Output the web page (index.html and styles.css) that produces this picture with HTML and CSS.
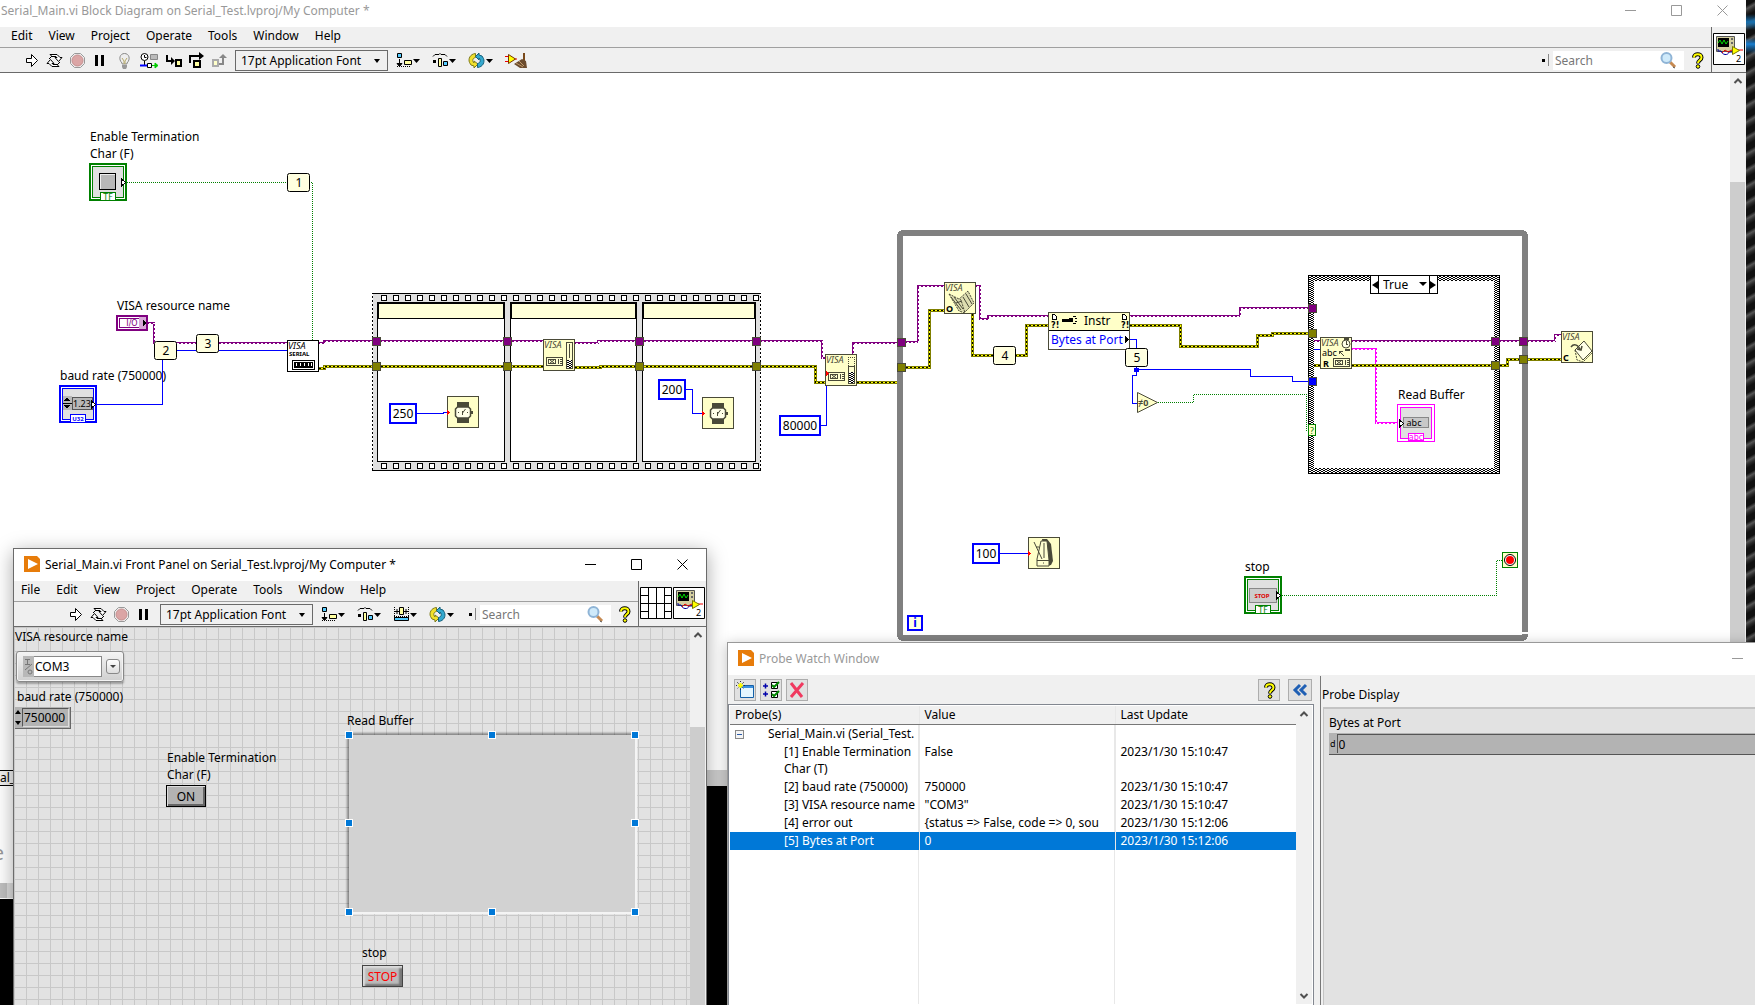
FILE: index.html
```html
<!DOCTYPE html>
<html lang="en">
  <head>
    <meta charset="UTF-8" />
    <meta name="viewport" content="width=device-width, initial-scale=1.0" />
    <title>Serial_Main.vi</title>
    <link rel="stylesheet" href="styles.css" />
  </head>
  <body>
    <!-- shared icons -->
    <svg class="defs" width="0" height="0">
      <symbol id="i-run" viewBox="0 0 17 17">
        <path d="M3.500 6.500h5v-4l6 6-6 6v-4h-5z" fill="#fff" stroke="#000" />
      </symbol>
      <symbol id="i-cont" viewBox="0 0 17 17">
        <path d="M4 2.500h7l3 3h2l-3.500 4L9 5.500h2l-1-1H6z" fill="#fff" stroke="#000" />
        <path d="M13 14.500H6l-3-3H1l3.500-4L8 11.500H6l1 1h4z" fill="#fff" stroke="#000" />
        <path d="M3 7l3-3M14 10l-3 3" stroke="#000" />
      </symbol>
      <symbol id="i-abort" viewBox="0 0 17 17">
        <path d="M5.500 1.500h6l4 4v6l-4 4h-6l-4-4v-6z" fill="#eee" stroke="#999" />
        <circle cx="8.500" cy="8.500" r="5.500" fill="#dba5a5" stroke="#c58f8f" />
      </symbol>
      <symbol id="i-pause" viewBox="0 0 17 17">
        <path d="M3 3h3v11H3zM9 3h3v11H9z" />
      </symbol>
      <symbol id="i-bulb" viewBox="0 0 17 17">
        <path d="M6 11C2 7 4 1.500 8.500 1.500S15 7 11 11v1H6z" fill="#eee" stroke="#888" />
        <path d="M6 6l2 3v3M11 6L9 9v3" fill="none" stroke="#b5a96a" />
        <path d="M6 13h5v2l-1 2H7l-1-2z" fill="#999" />
      </symbol>
      <symbol id="i-retain" viewBox="0 0 20 17">
        <circle cx="5.500" cy="5" r="3.500" fill="#fff" stroke="#000" />
        <path d="M5.500 3v2.500h2M5.500 9v4" fill="none" stroke="#000" />
        <path d="M11.500 2.500h7v5h-7z" fill="#bbb" stroke="#888" />
        <path d="M1 13.500h7" stroke="#00f" stroke-width="2" />
        <path d="M8.500 11.500h4v4h-4z" fill="#fff" stroke="#000" />
        <path d="M13 13.500h4M16 11l3 2.500-3 2.500z" fill="#0c0" stroke="#0c0" />
      </symbol>
      <symbol id="i-into" viewBox="0 0 17 17">
        <path d="M2 3v6h5" fill="none" stroke="#000" stroke-width="2" />
        <path d="M6 5l4 4-4 4z" />
        <path d="M11 8h5v6h-5z" fill="#ffffa0" stroke="#000" stroke-width="2" />
      </symbol>
      <symbol id="i-over" viewBox="0 0 17 17">
        <path d="M2 11V4h11" fill="none" stroke="#000" stroke-width="2" />
        <path d="M11 0l5 4-5 4z" />
        <path d="M6 9h6v6H6z" fill="#ffffa0" stroke="#000" stroke-width="2" />
      </symbol>
      <symbol id="i-out" viewBox="0 0 17 17">
        <path d="M2 8h5v6H2z" fill="#ffffc8" stroke="#aaa" stroke-width="2" />
        <path d="M8 12h4V5" fill="none" stroke="#888" stroke-width="2" />
        <path d="M8 6l4-4 4 4z" fill="#888" />
      </symbol>
      <symbol id="i-align" viewBox="0 0 25 17">
        <path d="M1.500 1.500h4v4h-4z" fill="#5cf" stroke="#000" />
        <path d="M3.500 7v5M1 11.500h5l-2.500 3z" stroke="#000" />
        <path d="M1 14.500h14" stroke="#000" stroke-dasharray="1 1" />
        <path d="M8.500 8.500h7v4h-7z" fill="#ffffa0" stroke="#000" />
        <path d="M17 7h7l-3.500 4z" />
      </symbol>
      <symbol id="i-dist" viewBox="0 0 25 17">
        <path d="M1 4.500l2-2h4l1-1 1 1h4l2 2" fill="none" stroke="#000" />
        <path d="M1 8h3v3H1z" />
        <path d="M6.500 6.500h3v8h-3z" fill="#ffffa0" stroke="#000" />
        <path d="M11.500 9.500h4v4h-4z" fill="#5cf" stroke="#000" />
        <path d="M17 7h7l-3.500 4z" />
      </symbol>
      <symbol id="i-size" viewBox="0 0 25 17">
        <path d="M1.500 1v12M15.500 1v12M1 10.500h15" stroke="#000" stroke-dasharray="1 1" />
        <path d="M2 5.500h4M11 5.500h4M4 3v5M13 3v5" stroke="#000" />
        <path d="M6.500 1.500h4v7h-4z" fill="#ffffa0" stroke="#000" />
        <path d="M1.500 11.500h14v3h-14z" fill="#5cf" stroke="#000" />
        <path d="M17 7h7l-3.500 4z" />
      </symbol>
      <symbol id="i-order" viewBox="0 0 25 17">
        <path d="M7.500 1.500C2 2 0 7 1.500 10.500L3 13l3 1v2l4-4-4-3v2C4 9 4.500 6 7.500 5.500z" fill="#f1e02c" stroke="#7c7a1a" />
        <path d="M9.500 15.500C15 15 17 10 15.500 6.500L14 4l-3-1V1L7.500 4.500 11 8V6c2 2 1.500 5-1.500 5.500z" fill="#35a9cf" stroke="#14617c" />
        <path d="M18 7h7l-3.500 4z" />
      </symbol>
      <symbol id="i-clean" viewBox="0 0 25 17">
        <path d="M1 4.500h3M1 9.500h3M9 7h4" stroke="#e00" />
        <path d="M4.500 2.500v9l7-4.500z" fill="#ff0" stroke="#730" />
        <path d="M20 1v8" stroke="#7a4a1a" stroke-width="2" />
        <path d="M10 12l8-5 4 2 1 7h-7z" fill="#6b4b2e" />
        <path d="M12 11l7 4M15 9l5 5" stroke="#c09a6a" />
      </symbol>
      <symbol id="i-search" viewBox="0 0 17 17">
        <path d="M10 10l5 5" stroke="#c68a52" stroke-width="3" />
        <path d="M13 15l2 1" stroke="#555" />
        <circle cx="6.500" cy="6" r="5" fill="#cfeafa" stroke="#8fb4d6" stroke-width="2" />
      </symbol>
      <symbol id="i-help" viewBox="0 0 13 17">
        <path d="M3 5.500C3 1 10.500 1 10.500 5.500 10.500 8.500 7 8 7 11.500" fill="none" stroke="#000" stroke-width="4" />
        <path d="M3 5.500C3 1 10.500 1 10.500 5.500 10.500 8.500 7 8 7 11" fill="none" stroke="#ff0" stroke-width="2" />
        <circle cx="7" cy="14.500" r="1.800" fill="#ff0" stroke="#000" />
      </symbol>
      <symbol id="i-lv" viewBox="0 0 16 16">
        <path d="M0 0h13l3 3v13H0z" fill="#e77c0a" />
        <path d="M4 3l10 5-10 5z" fill="#fff" />
      </symbol>
      <symbol id="i-vi" viewBox="0 0 32 32">
        <path d="M.500.500h31v31H.500z" fill="#fff" stroke="#000" />
        <path d="M3.500 3.500h18v15h-18z" fill="#d4cfa0" stroke="#555" />
        <path d="M5 5h11v9H5z" />
        <path d="M5 10l2-3 2 4 2-4 2 4 2-3" fill="none" stroke="#0d0" />
        <path d="M18 5h2v2h-2zM18 9h2v2h-2z" fill="#666" />
        <path d="M5 16v2h3c1 4 7 5 8 1h3" fill="none" stroke="#009" />
        <path d="M9 20l3-3 3 2 4-2M25 17h5" fill="none" stroke="#e00" />
        <path d="M19.500 13.500v8l7-4z" fill="#ff0" stroke="#770" />
      </symbol>
      <symbol id="i-min" viewBox="0 0 11 11"><path d="M0 5.500h11" stroke="currentColor" /></symbol>
      <symbol id="i-max" viewBox="0 0 11 11"><path d="M.500.500h10v10H.500z" fill="none" stroke="currentColor" /></symbol>
      <symbol id="i-close" viewBox="0 0 11 11"><path d="M.500.500l10 10M10.500.500l-10 10" stroke="currentColor" /></symbol>
      <symbol id="i-up" viewBox="0 0 16 16"><path d="M4.500 10L8 6.500l3.500 3.500" fill="none" stroke="#505050" stroke-width="2" /></symbol>
      <symbol id="i-down" viewBox="0 0 16 16"><path d="M4.500 6L8 9.500 11.500 6" fill="none" stroke="#505050" stroke-width="2" /></symbol>
    </svg>

    <main class="desktop">
      <div class="wallpaper"></div>

      <!-- block diagram -->
      <section class="window diagram-window inactive">
        <header class="titlebar slim">
          <h1 class="title">Serial_Main.vi Block Diagram on Serial_Test.lvproj/My Computer *</h1>
          <div class="win-btns">
            <button aria-label="Minimize"><svg width="11" height="11"><use href="#i-min" /></svg></button>
            <button aria-label="Maximize"><svg width="11" height="11"><use href="#i-max" /></svg></button>
            <button aria-label="Close"><svg width="11" height="11"><use href="#i-close" /></svg></button>
          </div>
        </header>
        <div class="bars">
          <div class="bars-main">
            <nav class="menubar">
              <button>Edit</button>
              <button>View</button>
              <button>Project</button>
              <button>Operate</button>
              <button>Tools</button>
              <button>Window</button>
              <button>Help</button>
            </nav>
            <div class="toolbar diagram-tools">
              <div class="tools">
                <button aria-label="Run"><svg width="17" height="17"><use href="#i-run" /></svg></button>
                <button aria-label="Run continuously"><svg width="17" height="17"><use href="#i-cont" /></svg></button>
                <button aria-label="Abort"><svg width="17" height="17"><use href="#i-abort" /></svg></button>
                <button aria-label="Pause"><svg width="17" height="17"><use href="#i-pause" /></svg></button>
              </div>
              <div class="tools">
                <button aria-label="Highlight execution"><svg width="17" height="17"><use href="#i-bulb" /></svg></button>
                <button aria-label="Retain wire values"><svg width="20" height="17"><use href="#i-retain" /></svg></button>
                <button aria-label="Step into"><svg width="17" height="17"><use href="#i-into" /></svg></button>
                <button aria-label="Step over"><svg width="17" height="17"><use href="#i-over" /></svg></button>
                <button aria-label="Step out"><svg width="17" height="17"><use href="#i-out" /></svg></button>
              </div>
              <span class="font-pick">
                <select aria-label="Text settings"><option>17pt Application Font</option></select>
              </span>
              <div class="tools wide">
                <button aria-label="Align objects"><svg width="25" height="17"><use href="#i-align" /></svg></button>
                <button aria-label="Distribute objects"><svg width="25" height="17"><use href="#i-dist" /></svg></button>
                <button aria-label="Reorder"><svg width="25" height="17"><use href="#i-order" /></svg></button>
                <button aria-label="Clean up diagram"><svg width="25" height="17"><use href="#i-clean" /></svg></button>
              </div>
              <div class="search-area">
                <span class="grip"></span>
                <label class="search">
                  <input type="text" placeholder="Search" aria-label="Search" />
                  <svg width="17" height="17"><use href="#i-search" /></svg>
                </label>
                <button class="help" aria-label="Context help"><svg width="13" height="17"><use href="#i-help" /></svg></button>
              </div>
            </div>
          </div>
          <div class="vi-pane">
            <svg width="32" height="32"><use href="#i-vi" /><text class="mini" x="23" y="29">2</text></svg>
          </div>
        </div>

        <div class="client">
          <div class="canvas">
            <svg class="diagram" width="1730" height="697" viewBox="0 73 1730 697">
              <defs>
                <pattern id="hatch" width="4" height="4" patternUnits="userSpaceOnUse">
                  <path d="M0 0h4v4H0z" fill="#fff" />
                  <path d="M0 0h1v1H0zM1 1h2v1H1zM3 0h1v1H3zM0 2h1v1H0zM3 2h1v1H3zM1 3h2v1H1z" />
                </pattern>
                <pattern id="film" x="381" width="12" height="9" y="294" patternUnits="userSpaceOnUse">
                  <path d="M.500 1.500h5v5h-5z" fill="#fff" stroke="#000" />
                </pattern>
                <pattern id="film2" x="381" width="12" height="9" y="462" patternUnits="userSpaceOnUse">
                  <path d="M.500 1.500h5v5h-5z" fill="#fff" stroke="#000" />
                </pattern>
                <g id="visa-wires">
                  <path d="M148 323h6v20h133M319 343h5v-2h219M575 343h23v-2h224v17h4" />
                  <path d="M853 354v-11h44M906 342h12v-56h26M976 286h4v33h8v-3h252v-8h68" />
                  <path d="M1314 341h6M1352 341h203v-6h6" />
                </g>
                <g id="error-wires">
                  <path d="M319 368.500h5v-2h219M575 367.500h25v-1h215.500v16h10M857 382.500h40" />
                  <path d="M906 367.500h23.500v-57h14.500M972.500 314v41.500h54v-30h22" />
                  <path d="M1130 325.500h50.500v21h77v-11h14.500v-2h36" />
                  <path d="M1314 365.500h6M1352 365.500h155v-6h54" />
                </g>
                <symbol id="n-watch" viewBox="0 0 32 32">
                  <path class="node" d="M.500.500h31v31H.500z" />
                  <path d="M10 6h12v5H10zM10 22h12v5H10z" fill="#4a4a38" />
                  <path class="smooth" d="M10.500 11h11l2 2v7l-2 2h-11l-2-2v-7z" fill="#ffffe8" stroke="#4a4a38" stroke-width="1.500" />
                  <path d="M24 15h2v3h-2z" fill="#4a4a38" />
                  <path class="smooth" d="M15.500 19v-4M15.500 17l3-4M11 16.500h1M20 16.500h1" stroke="#4a4a38" />
                  <path d="M0 14l3 2-3 3z" fill="#f00" />
                </symbol>
                <symbol id="n-port" viewBox="0 0 18 10">
                  <path d="M.500.500h16v8H.500z" fill="#ffffd0" stroke="#4a4a38" />
                  <path d="M2.500 2.500h7v4h-7zM12 2v5M14 2h2v2h-2M14 6h2" fill="none" stroke="#4a4a38" />
                  <path class="smooth" d="M4 3l4 3M8 3L4 6" stroke="#4a4a38" />
                </symbol>
              </defs>

              <!-- while loop -->
              <rect class="loop" x="900" y="233" width="625" height="405" rx="3" />
              <path d="M1520 632h9v2h-9z" fill="#fff" />

              <!-- flat sequence -->
              <path d="M372.500 293.500h388v177h-388z" fill="#e0e0e0" stroke="#000" />
              <path d="M372.500 294v176M760.500 294v176" stroke="#fff" stroke-dasharray="2 2" />
              <path d="M381 294h378v8H381z" fill="url(#film)" />
              <path d="M381 462h378v8H381z" fill="url(#film2)" />
              <g fill="#fff" stroke="#000">
                <path d="M377.500 302.500h127v159h-127zM510.500 302.500h126v159h-126zM642.500 302.500h113v159h-113z" />
                <path class="banner" d="M378.500 303.500h125v15h-125zM511.500 303.500h124v15h-124zM643.500 303.500h111v15h-111z" />
              </g>

              <!-- case structure -->
              <path d="M1308.500 275.500h191v198h-191z" fill="url(#hatch)" stroke="#000" />
              <path d="M1314 281h180v187h-180z" fill="#fff" />

              <!-- boolean wires -->
              <g class="wire-bool">
                <path d="M127 182.500h185.500V341" />
                <path d="M1158 402.500h35.500v-8h113V431" />
                <path d="M1282 595.500h214.500v-35h6" />
              </g>

              <!-- integer wires -->
              <g class="wire-int">
                <path d="M97 404.500h65.500V358M177 350.500h110" />
                <path d="M417 413.500h26v-1h6" />
                <path d="M686 389.500h6.500v24h10" />
                <path d="M821 425.500h5.500V386" />
                <path d="M1130 339.500h6.500v30h114v7h42v5h16" />
                <path d="M1136.500 369v6h-4v28h6" />
                <path d="M1314 349.500h6" />
                <path d="M1000 553.500h28" />
              </g>
              <circle cx="1136.500" cy="370" r="2.500" fill="#00f" />

              <!-- resource wires -->
              <use class="wire-visa" href="#visa-wires" />
              <use class="wire-gap" href="#visa-wires" />

              <!-- string wire -->
              <path class="wire-str" d="M1352 349h24v74h22" />
              <path class="wire-gap" d="M1352 349h24v74h22" />

              <!-- error wires -->
              <use class="wire-err" href="#error-wires" />
              <use class="wire-err-fill" href="#error-wires" />
              <use class="wire-err-dash" href="#error-wires" />

              <!-- tunnels -->
              <g class="tunnel" fill="#800080">
                <path d="M372.500 337.500h8v8h-8zM503.500 337.500h8v8h-8zM635.500 337.500h8v8h-8zM752.500 337.500h8v8h-8z" />
                <path d="M897.500 338.500h8v8h-8zM1308.500 304.500h8v8h-8zM1491.500 337.500h8v8h-8zM1519.500 337.500h8v8h-8z" />
              </g>
              <g class="tunnel" fill="#808000">
                <path d="M372.500 362.500h8v8h-8zM503.500 362.500h8v8h-8zM635.500 362.500h8v8h-8zM752.500 362.500h8v8h-8z" />
                <path d="M897.500 363.500h8v8h-8zM1308.500 329.500h8v8h-8zM1491.500 361.500h8v8h-8zM1519.500 355.500h8v8h-8z" />
              </g>
              <path class="tunnel" fill="#00f" d="M1308.500 377.500h8v8h-8z" />
              <path d="M1308.500 424.500h7v11h-7z" fill="#ffffc8" stroke="#008000" />
              <text class="mini green" x="1312" y="434" text-anchor="middle">?</text>

              <!-- Enable Termination -->
              <text x="90" y="141">Enable Termination</text>
              <text x="90" y="158">Char (F)</text>
              <g class="terminal green-term" transform="translate(89 163)">
                <path class="edge" d="M1 1h36v36H1z" />
                <path class="inner" d="M3.500 3.500h31v31h-31z" />
                <path d="M10.500 10.500h16v16h-16z" fill="#b8b8b8" stroke="#000" />
                <path d="M11.500 26v-14.500H26" fill="none" stroke="#eee" />
                <path d="M32.500 16v7l4-3.500z" fill="#fff" stroke="#000" />
                <path d="M11.500 29.500h15v8h-15z" fill="#fff" stroke="#008000" />
                <text class="tag green" x="19" y="37" text-anchor="middle">TF</text>
              </g>

              <!-- VISA resource name -->
              <text x="117" y="310">VISA resource name</text>
              <path d="M117 316h30v14h-30z" fill="#fff" stroke="#800080" stroke-width="2" />
              <path d="M119.500 318.500h26v9h-26z" fill="#fff" stroke="#800080" />
              <path d="M139 317h7v12h-7z" fill="#d8a8d8" />
              <text class="tag purple" x="132" y="326" text-anchor="middle">I/O</text>
              <path d="M143 320l3 3-3 3z" />

              <!-- baud rate -->
              <text x="60" y="380">baud rate (750000)</text>
              <g class="terminal blue-term" transform="translate(59 385)">
                <path class="edge" d="M1 1h36v36H1z" />
                <path class="inner" d="M3.500 3.500h31v31h-31z" />
                <path d="M4 11h9v14H4z" fill="#b8b8b8" />
                <path d="M5 16l3-4 3 4zM5 20l3 4 3-4zM4 17.500h9v1H4z" />
                <path d="M13.500 12.500h20v12h-20z" fill="#b8b8b8" stroke="#555" />
                <text class="mini" x="23" y="22" text-anchor="middle">1.23</text>
                <path d="M32.500 16v7l4-3.500z" fill="#fff" stroke="#000" />
                <path d="M11.500 29.500h15v8h-15z" fill="#fff" stroke="#00f" />
                <text class="tiny bold blue" x="19" y="36" text-anchor="middle">U32</text>
              </g>

              <!-- VISA configure serial port -->
              <path d="M287.500 340.500h31v31h-31z" fill="#fff" stroke="#000" />
              <text class="visa black" x="288" y="349">VISA</text>
              <text class="tiny bold" x="289" y="356">SERIAL</text>
              <path d="M292.500 360.500h22v9h-22z" fill="#fff" stroke="#000" />
              <path d="M294 362h19v6h-19z" />
              <path d="M296.500 363v3M300.500 363v3M304.500 363v3M308.500 363v3M311.500 363v3" stroke="#fff" />

              <!-- constants -->
              <g class="const">
                <path d="M390 404h26v19h-26z" />
                <path d="M659 380h26v19h-26z" />
                <path d="M780 416h40v19h-40z" />
                <path d="M973 544h26v19h-26z" />
              </g>
              <g text-anchor="middle">
                <text x="403" y="418">250</text>
                <text x="672" y="394">200</text>
                <text x="800" y="430">80000</text>
                <text x="986" y="558">100</text>
              </g>

              <!-- wait functions -->
              <use href="#n-watch" x="447" y="396" width="32" height="32" />
              <use href="#n-watch" x="702" y="397" width="32" height="32" />

              <!-- VISA set buffer / flush -->
              <path class="node" d="M543.500 339.500h31v31h-31z" />
              <text class="visa" x="544" y="348">VISA</text>
              <use href="#n-port" x="546" y="357" width="18" height="10" />
              <path d="M566.500 342.500h6v26h-6z" fill="#ffffd0" stroke="#4a4a38" />
              <path d="M569.500 344v14" stroke="#4a4a38" />
              <path d="M567 360h5v8h-5z" fill="url(#hatch)" />
              <path class="node" d="M825.500 354.500h31v31h-31z" />
              <text class="visa" x="826" y="363">VISA</text>
              <use href="#n-port" x="828" y="372" width="18" height="10" />
              <path d="M848.500 366v-8.500h6V366" fill="none" stroke="#4a4a38" stroke-dasharray="1 1" />
              <path d="M848.500 366.500h6v17h-6z" fill="#ffffd0" stroke="#4a4a38" />
              <path d="M849 372h5v11h-5z" fill="url(#hatch)" />
              <path d="M826 371l3 2-3 3z" fill="#f00" />

              <!-- VISA open -->
              <path class="node" d="M944.500 282.500h31v31h-31z" />
              <text class="visa" x="945" y="291">VISA</text>
              <text class="mini bold" x="946" y="312">O</text>
              <path class="smooth" d="M958 300l10-9 6 12-9 9z" fill="#ddddb0" stroke="#4a4a38" stroke-dasharray="2 1" />
              <path class="smooth" d="M949 294l12 6 4 13-6-2z" fill="#ddddb0" stroke="#4a4a38" stroke-dasharray="2 1" />
              <path class="smooth" d="M951 297l10 13M954 297l9 12M963 297l6 10M966 294l6 10M956 303l6-2" fill="none" stroke="#4a4a38" />

              <!-- property node -->
              <path d="M1048.500 312.500h81v37h-81z" fill="#fff" stroke="#4a4a38" />
              <path d="M1049 313h80v17h-80z" fill="#ffffc8" />
              <path d="M1049 330.500h80" stroke="#000" />
              <path d="M1052.500 314.500h2l2 2v3h-4zM1122.500 314.500h2l2 2v3h-4z" fill="#fff" stroke="#000" />
              <text class="tag bold" x="1051" y="328">?!</text>
              <text class="tag bold" x="1121" y="328">?!</text>
              <path d="M1062 319h8v3h-8zM1069 318h4v4h-4zM1073 316h3v1h-3zM1075 318h2v1h-2zM1073 323h3v1h-3zM1075 321h2v1h-2z" />
              <text x="1084" y="325">Instr</text>
              <text class="blue" x="1051" y="344">Bytes at Port</text>
              <path d="M1125 336l4 3-4 4z" />

              <!-- not equal to zero -->
              <path class="node smooth" d="M1137.500 392.500v20l20-10z" />
              <text class="mini bold olive" x="1138" y="406">≠0</text>

              <!-- metronome -->
              <path class="node" d="M1028.500 537.500h31v31h-31z" />
              <path class="smooth" d="M1042 539h5l4 5 2 17-2 4-5 1z" fill="#4a4a38" />
              <path class="smooth" d="M1041 541h6l2 19v6h-12v-7z" fill="#ffffd0" stroke="#4a4a38" />
              <path class="smooth" d="M1037 560.500h12M1034 542l8 17M1036 547h3M1044 543v15M1043 563h1" fill="none" stroke="#4a4a38" />
              <path d="M1028 551l3 2-3 3z" fill="#f00" />

              <!-- iteration terminal -->
              <path d="M908 616h14v14h-14z" fill="#ffffe0" stroke="#00f" stroke-width="2" />
              <text class="blue bold" x="915" y="627" text-anchor="middle">i</text>

              <!-- VISA read -->
              <path class="node" d="M1320.500 337.500h31v31h-31z" />
              <text class="visa" x="1321" y="346">VISA</text>
              <text class="mini" x="1322" y="356">abc</text>
              <text class="mini bold" x="1323" y="367">R</text>
              <use href="#n-port" x="1333" y="358" width="18" height="10" />
              <circle class="smooth" cx="1346" cy="344" r="4" fill="#ffffe8" stroke="#4a4a38" />
              <path d="M1344 338h5v2h-5zM1345 349h5v2h-5z" fill="#4a4a38" />
              <path d="M1346 341v3h2M1339 351l5 5M1339 354v-3h4" fill="none" stroke="#4a4a38" />

              <!-- Read Buffer -->
              <text x="1398" y="399">Read Buffer</text>
              <g class="terminal" transform="translate(1397 404)">
                <path d="M.500.500h37v37H.500z" fill="#fff" stroke="#f0f" />
                <path d="M3.500 3.500h31v31h-31z" fill="#e0e0e0" stroke="#f0f" />
                <path d="M6.500 13.500h25v10h-25z" fill="#c8c8c8" stroke="#888" />
                <text class="mini" x="17" y="22" text-anchor="middle">abc</text>
                <path d="M2.500 16v7l4-3.500z" fill="#fff" stroke="#000" />
                <path d="M11.500 29.500h15v7h-15z" fill="#fff" stroke="#f0f" />
                <text class="tag pink" x="19" y="36" text-anchor="middle">abc</text>
              </g>

              <!-- VISA close -->
              <path class="node" d="M1561.500 331.500h31v31h-31z" />
              <text class="visa" x="1562" y="340">VISA</text>
              <text class="mini bold" x="1563" y="361">C</text>
              <path class="smooth" d="M1575 350l9-9 8 10-9 9z" fill="#ffffe8" stroke="#4a4a38" />
              <path class="smooth" d="M1575 350l2 10 6 2 9-9" fill="none" stroke="#4a4a38" stroke-dasharray="2 1" />
              <path class="smooth" d="M1571 347c3-4 8-2 9 3M1577 349l4 1 1-4" fill="none" stroke="#4a4a38" stroke-width="1.500" />

              <!-- stop -->
              <text x="1245" y="571">stop</text>
              <g class="terminal green-term" transform="translate(1244 576)">
                <path class="edge" d="M1 1h36v36H1z" />
                <path class="inner" d="M3.500 3.500h31v31h-31z" />
                <path d="M5.500 12.500h27v14h-27z" fill="#ccc" stroke="#888" />
                <text class="tiny bold red" x="18" y="22" text-anchor="middle">STOP</text>
                <path d="M32.500 16v7l4-3.500z" fill="#fff" stroke="#000" />
                <path d="M11.500 29.500h15v8h-15z" fill="#fff" stroke="#008000" />
                <text class="tag green" x="19" y="37" text-anchor="middle">TF</text>
              </g>
              <path d="M1502.500 552.500h15v15h-15z" fill="#ffffc8" stroke="#008000" />
              <circle class="smooth" cx="1510" cy="560" r="5.500" fill="#fff" stroke="#000" />
              <circle class="smooth" cx="1510" cy="560" r="4" fill="#f00" />

              <!-- probes -->
              <g class="probe">
                <rect x="287.500" y="173.500" width="22" height="18" rx="2" />
                <rect x="154.500" y="341.500" width="22" height="18" rx="2" />
                <rect x="196.500" y="334.500" width="22" height="18" rx="2" />
                <rect x="993.500" y="346.500" width="22" height="18" rx="2" />
                <rect x="1125.500" y="348.500" width="22" height="18" rx="2" />
              </g>
              <g text-anchor="middle">
                <text x="299" y="187">1</text>
                <text x="166" y="355">2</text>
                <text x="208" y="348">3</text>
                <text x="1005" y="360">4</text>
                <text x="1137" y="362">5</text>
              </g>
            </svg>
            <div class="case-selector">
              <button class="prev" aria-label="Previous case"></button>
              <select aria-label="Case"><option>True</option><option>False</option></select>
              <button class="next" aria-label="Next case"></button>
            </div>
            <div class="hscroll"><span>al_T</span></div>
          </div>
          <div class="vscroll">
            <svg width="16" height="16"><use href="#i-up" /></svg>
            <div class="thumb"></div>
          </div>
        </div>
      </section>

      <section class="behind">
        <span>e</span>
        <div class="behind-scroll"></div>
      </section>

      <!-- front panel -->
      <section class="window panel-window">
        <header class="titlebar">
          <svg class="app-icon" width="16" height="16"><use href="#i-lv" /></svg>
          <h2 class="title">Serial_Main.vi Front Panel on Serial_Test.lvproj/My Computer *</h2>
          <div class="win-btns">
            <button aria-label="Minimize"><svg width="11" height="11"><use href="#i-min" /></svg></button>
            <button aria-label="Maximize"><svg width="11" height="11"><use href="#i-max" /></svg></button>
            <button aria-label="Close"><svg width="11" height="11"><use href="#i-close" /></svg></button>
          </div>
        </header>
        <div class="bars">
          <div class="bars-main">
            <nav class="menubar">
              <button>File</button>
              <button>Edit</button>
              <button>View</button>
              <button>Project</button>
              <button>Operate</button>
              <button>Tools</button>
              <button>Window</button>
              <button>Help</button>
            </nav>
            <div class="toolbar panel-tools">
              <div class="tools">
                <button aria-label="Run"><svg width="17" height="17"><use href="#i-run" /></svg></button>
                <button aria-label="Run continuously"><svg width="17" height="17"><use href="#i-cont" /></svg></button>
                <button aria-label="Abort"><svg width="17" height="17"><use href="#i-abort" /></svg></button>
                <button aria-label="Pause"><svg width="17" height="17"><use href="#i-pause" /></svg></button>
              </div>
              <span class="font-pick">
                <select aria-label="Text settings"><option>17pt Application Font</option></select>
              </span>
              <div class="tools wide">
                <button aria-label="Align objects"><svg width="25" height="17"><use href="#i-align" /></svg></button>
                <button aria-label="Distribute objects"><svg width="25" height="17"><use href="#i-dist" /></svg></button>
                <button aria-label="Resize objects"><svg width="25" height="17"><use href="#i-size" /></svg></button>
                <button aria-label="Reorder"><svg width="25" height="17"><use href="#i-order" /></svg></button>
              </div>
              <div class="search-area">
                <span class="grip"></span>
                <label class="search">
                  <input type="text" placeholder="Search" aria-label="Search" />
                  <svg width="17" height="17"><use href="#i-search" /></svg>
                </label>
                <button class="help" aria-label="Context help"><svg width="13" height="17"><use href="#i-help" /></svg></button>
              </div>
            </div>
          </div>
          <div class="vi-pane">
            <svg width="32" height="32" viewBox="0 0 32 32">
              <path d="M.500.500h31v31H.500zM8.500 0v32M16.500 0v32M24.500 0v32M0 8.500h8M24 8.500h8M0 16.500h32M0 24.500h8M24 24.500h8" fill="#fff" stroke="#000" />
            </svg>
            <svg width="32" height="32"><use href="#i-vi" /><text class="mini" x="23" y="29">2</text></svg>
          </div>
        </div>

        <div class="client">
          <div class="panel">
            <div class="ctl visa-ctl">
              <label for="visa">VISA resource name</label>
              <div class="ring">
                <svg class="io" width="11" height="21" viewBox="0 0 11 21">
                  <path d="M2 3.500h5M4.500 3.500v5M2 8.500h5M2 14l7-6" fill="none" stroke="#777" />
                  <circle cx="7" cy="16" r="2" fill="none" stroke="#777" />
                </svg>
                <input id="visa" type="text" value="COM3" />
                <button aria-label="Browse"></button>
              </div>
            </div>
            <div class="ctl baud-ctl">
              <label for="baud">baud rate (750000)</label>
              <div class="numeric">
                <span class="spin"><button class="inc" aria-label="Increment"></button><button class="dec" aria-label="Decrement"></button></span>
                <input id="baud" type="text" value="750000" />
              </div>
            </div>
            <div class="ctl enable-ctl">
              <label for="enable">Enable Termination<br />Char (F)</label>
              <button id="enable" class="on-btn">ON</button>
            </div>
            <div class="ctl buffer-ctl">
              <label for="buffer">Read Buffer</label>
              <div class="buffer">
                <textarea id="buffer" readonly></textarea>
                <i class="handle t l"></i><i class="handle t c"></i><i class="handle t r"></i>
                <i class="handle m l"></i><i class="handle m r"></i>
                <i class="handle b l"></i><i class="handle b c"></i><i class="handle b r"></i>
              </div>
            </div>
            <div class="ctl stop-ctl">
              <label for="stop">stop</label>
              <button id="stop" class="stop-btn">STOP</button>
            </div>
          </div>
          <div class="vscroll">
            <svg width="16" height="16"><use href="#i-up" /></svg>
            <div class="thumb"></div>
          </div>
        </div>
      </section>

      <!-- probe watch window -->
      <section class="window probe-window inactive">
        <header class="titlebar">
          <svg class="app-icon" width="16" height="16"><use href="#i-lv" /></svg>
          <h2 class="title">Probe Watch Window</h2>
          <div class="win-btns">
            <button aria-label="Minimize"><svg width="11" height="11"><use href="#i-min" /></svg></button>
          </div>
        </header>
        <div class="probe-body">
          <div class="probe-left">
            <div class="probe-tools">
              <button aria-label="Open in new window">
                <svg width="18" height="18" viewBox="0 0 18 18">
                  <path d="M4.500 4.500h13v12h-13z" fill="#e4f6ff" stroke="#1460a8" />
                  <path d="M5 5h12v2H5z" fill="#3a8fe0" />
                  <path d="M4.500 0v9M0 4.500h9M1 1l7 7M8 1L1 8" stroke="#333" stroke-dasharray="1 1" />
                  <path d="M4.500 2v5M2 4.500h5" stroke="#ff0" stroke-width="2" />
                </svg>
              </button>
              <button aria-label="Expand">
                <svg width="18" height="18" viewBox="0 0 18 18">
                  <path d="M1 5h5M3.500 2.500v5M1 13h5M3.500 10.500v5" stroke="#00a" stroke-width="1.500" />
                  <path d="M9.500 1.500h6v6h-6zM9.500 10.500h6v6h-6z" fill="#fff" stroke="#000" />
                  <path d="M10 4l2 2 5-5M10 13l2 2 5-5" fill="none" stroke="#080" stroke-width="2" />
                </svg>
              </button>
              <button aria-label="Remove probe">
                <svg width="18" height="18" viewBox="0 0 18 18">
                  <path d="M3 2l11 14M15 2L3 16" stroke="#f0395f" stroke-width="3" />
                </svg>
              </button>
              <button class="right" aria-label="Help"><svg width="13" height="17"><use href="#i-help" /></svg></button>
              <button class="collapse" aria-label="Hide probe display">
                <svg width="18" height="18" viewBox="0 0 18 18">
                  <path d="M9 4L4 9l5 5M15 4l-5 5 5 5" fill="none" stroke="#1f5fb4" stroke-width="3" />
                </svg>
              </button>
            </div>
            <div class="probe-list">
              <div class="rows">
                <table>
                  <colgroup><col class="c-name" /><col class="c-value" /><col /></colgroup>
                  <thead>
                    <tr><th>Probe(s)</th><th>Value</th><th>Last Update</th></tr>
                  </thead>
                  <tbody>
                    <tr class="group"><td><button class="fold" aria-label="Collapse"></button>Serial_Main.vi (Serial_Test.</td><td></td><td></td></tr>
                    <tr><td>[1] Enable Termination<br />Char (T)</td><td>False</td><td>2023/1/30 15:10:47</td></tr>
                    <tr><td>[2] baud rate (750000)</td><td>750000</td><td>2023/1/30 15:10:47</td></tr>
                    <tr><td>[3] VISA resource name</td><td>"COM3"</td><td>2023/1/30 15:10:47</td></tr>
                    <tr><td>[4] error out</td><td>{status =&gt; False, code =&gt; 0, sou</td><td>2023/1/30 15:12:06</td></tr>
                    <tr class="selected"><td>[5] Bytes at Port</td><td>0</td><td>2023/1/30 15:12:06</td></tr>
                  </tbody>
                </table>
              </div>
              <div class="vscroll ends">
                <svg width="16" height="16"><use href="#i-up" /></svg>
                <svg width="16" height="16"><use href="#i-down" /></svg>
              </div>
            </div>
          </div>
          <div class="probe-display">
            <h3>Probe Display</h3>
            <div class="display-pane">
              <label for="bytes">Bytes at Port</label>
              <div class="bytes"><span class="radix">d</span><input id="bytes" type="text" value="0" readonly /></div>
            </div>
          </div>
        </div>
      </section>
    </main>
  </body>
</html>
```
FILE: styles.css
```css
* {
  box-sizing: border-box;
}
body {
  margin: 0;
  background: #000;
  font-family: "Noto Sans", "Noto Sans CJK SC", sans-serif;
  font-size: 12px;
  line-height: 17px;
  color: #000;
}
button,
input,
select,
textarea {
  font: inherit;
  color: inherit;
  margin: 0;
  padding: 0;
  border: 0;
  border-radius: 0;
  background: none;
  appearance: none;
}
svg {
  display: block;
}
h1,
h2,
h3 {
  margin: 0;
  font-size: 12px;
  font-weight: normal;
}
.defs {
  position: absolute;
}
.desktop {
  position: relative;
  height: 100vh;
  overflow: hidden;
}
.wallpaper {
  position: absolute;
  top: 0;
  right: 0;
  width: 9px;
  height: 642px;
  background:
    linear-gradient(#0000 14px, #1670b0 22px, #0000 30px, #0000 38px, #1a7fd0 44px, #0000 54px),
    repeating-linear-gradient(150deg, #111 0 5px, #555 8px, #2a2a2a 11px, #111 14px);
}

/* windows */
.window {
  position: absolute;
  display: flex;
  flex-direction: column;
  background: #fff;
}
.diagram-window {
  top: 0;
  left: 0;
  right: 9px;
}
.panel-window {
  top: 548px;
  left: 13px;
  bottom: 0;
  width: 694px;
  border: 1px solid #6b6b6b;
  border-bottom: 0;
  box-shadow: 0 4px 18px rgba(0, 0, 0, 0.35);
}
.probe-window {
  top: 642px;
  left: 727px;
  right: 0;
  bottom: 0;
  border: 1px solid #999;
  border-width: 1px 0 0 1px;
  box-shadow: 0 2px 12px rgba(0, 0, 0, 0.25);
}
.titlebar {
  display: flex;
  align-items: center;
  height: 32px;
  padding: 0 0 2px 10px;
  background: #fff;
}
.titlebar.slim {
  height: 27px;
  padding: 0 0 6px 1px;
}
.app-icon {
  margin-right: 5px;
}
.inactive .titlebar {
  color: #999;
}
.win-btns {
  display: flex;
  gap: 35px;
  margin-left: auto;
  padding-right: 18px;
}
.win-btns button {
  width: 11px;
}
.probe-window .win-btns {
  padding-right: 12px;
}

.bars {
  display: flex;
  background: #f0f0f0;
  border-bottom: 1px solid #6a6a6a;
}
.bars-main {
  flex: 1;
}
.menubar {
  display: flex;
  align-items: flex-start;
  gap: 16px;
  height: 21px;
  padding-left: 11px;
  border-bottom: 1px solid #a0a0a0;
}
.panel-window .menubar {
  padding-left: 7px;
}
.toolbar {
  display: flex;
  align-items: center;
  height: 24px;
}
.diagram-tools {
  padding-left: 23px;
}
.panel-tools {
  padding-left: 53px;
}
.tools {
  display: flex;
  gap: 6px;
  margin-right: 7px;
}
.tools.wide {
  gap: 11px;
  margin: 0 0 0 8px;
}
.font-pick {
  position: relative;
  width: 153px;
}
.font-pick select {
  width: 100%;
  height: 21px;
  padding-left: 5px;
  border: 1px solid #6a6a6a;
  background: #f0f0f0;
}
.font-pick::after {
  content: "";
  position: absolute;
  top: 9px;
  right: 8px;
  border: 3px solid transparent;
  border-top: 4px solid #000;
  border-bottom: 0;
}
.search-area {
  display: flex;
  align-items: center;
  margin-left: auto;
  padding-right: 7px;
}
.grip {
  width: 8px;
  height: 12px;
  margin-right: 4px;
  border-right: 1px solid #888;
  background: linear-gradient(#000, #000) 1px 5px / 3px 3px no-repeat;
}
.search {
  display: flex;
  align-items: center;
  width: 131px;
  height: 19px;
  padding: 0 7px 0 2px;
  background: #fff;
}
.search input {
  flex: 1;
  min-width: 0;
}
.search input::placeholder {
  color: #777;
  opacity: 1;
}
.help {
  margin-left: 7px;
}
.vi-pane {
  display: flex;
  gap: 1px;
  padding: 6px 1px;
  border-left: 1px solid #6a6a6a;
}

.client {
  display: flex;
  flex: 1;
  min-height: 0;
}
.vscroll {
  display: flex;
  flex-direction: column;
  width: 16px;
  background: #f0f0f0;
}
.vscroll .thumb {
  flex: 1;
  margin: 84px 1px 0 0;
  background: #cdcdcd;
}
.diagram-window .thumb {
  margin-top: 93px;
}
.vscroll.ends {
  justify-content: space-between;
}

/* block diagram */
.canvas {
  position: relative;
  flex: 1;
  min-width: 0;
  overflow: hidden;
}
.hscroll {
  height: 16px;
  overflow: hidden;
  background: #cdcdcd;
  line-height: 14px;
}
.hscroll span {
  display: block;
  width: 24px;
  border: 1px solid #000;
  border-width: 1px 0;
  background: #f0f0f0;
}
.diagram {
  shape-rendering: crispEdges;
}
.diagram .smooth {
  shape-rendering: auto;
}
.loop {
  fill: none;
  stroke: #808080;
  stroke-width: 6;
}
.banner {
  fill: #ffffd8;
}
.node {
  fill: #ffffc8;
  stroke: #4a4a38;
}
.wire-bool {
  fill: none;
  stroke: #008000;
  stroke-dasharray: 1 1;
}
.wire-int {
  fill: none;
  stroke: #00f;
}
.wire-visa {
  fill: none;
  stroke: #800080;
  stroke-width: 2;
}
.wire-str {
  fill: none;
  stroke: #f0f;
  stroke-width: 2;
}
.wire-gap {
  fill: none;
  stroke: #fff;
  stroke-dasharray: 2 2;
  transform: translate(0.5px, 0.5px);
}
.wire-err {
  fill: none;
  stroke: #808000;
  stroke-width: 3;
}
.wire-err-fill {
  fill: none;
  stroke: #ff0;
}
.wire-err-dash {
  fill: none;
  stroke: #000;
  stroke-dasharray: 2 2;
}
.tunnel {
  stroke: #4a4a38;
}
.const {
  fill: #fff;
  stroke: #00f;
  stroke-width: 2;
}
.probe {
  fill: #ffffe0;
  stroke: #000;
  shape-rendering: auto;
}
.terminal .edge {
  fill: #fff;
  stroke-width: 2;
}
.terminal .inner {
  fill: #e0e0e0;
}
.green-term .edge,
.green-term .inner {
  stroke: #008000;
}
.blue-term .edge,
.blue-term .inner {
  stroke: #00f;
}
.visa {
  font-size: 9px;
  font-style: italic;
  fill: #4a4a38;
}
.tiny {
  font-size: 6px;
}
.tag {
  font-family: "DejaVu Sans", sans-serif;
  font-size: 8px;
}
.mini {
  font-size: 9px;
}
.bold {
  font-weight: bold;
}
.black {
  fill: #000;
}
.olive {
  fill: #4a4a38;
}
.green {
  fill: #008000;
}
.purple {
  fill: #800080;
}
.blue {
  fill: #00f;
}
.pink {
  fill: #f0f;
}
.red {
  fill: #d00;
}
.case-selector {
  position: absolute;
  top: 202px;
  left: 1370px;
  display: flex;
  align-items: center;
  width: 68px;
  height: 19px;
  border: 1px solid #000;
  background: #fff;
}
.case-selector::after {
  content: "";
  position: absolute;
  top: 6px;
  right: 10px;
  border: 4px solid transparent;
  border-top-color: #000;
  border-bottom: 0;
}
.case-selector select {
  flex: 1;
  min-width: 0;
  height: 17px;
  padding-left: 4px;
  border: 1px solid #000;
  border-width: 0 1px;
}
.case-selector button {
  width: 7px;
  height: 8px;
  border: 4px solid transparent;
}
.case-selector .prev {
  border-right: 6px solid #000;
  border-left: 0;
}
.case-selector .next {
  border-left: 6px solid #000;
  border-right: 0;
}

/* window behind on the left edge */
.behind {
  position: absolute;
  top: 786px;
  left: 0;
  width: 14px;
  height: 113px;
  padding-top: 55px;
  background: #fff;
  color: #999;
  font-size: 20px;
  line-height: 24px;
}
.behind span {
  display: block;
  width: 4px;
  direction: rtl;
}
.behind-scroll {
  height: 15px;
  margin-top: 18px;
  background: linear-gradient(90deg, #c0c0c0 7px, #ddd 7px);
}

/* front panel */
.panel {
  position: relative;
  flex: 1;
  background:
    linear-gradient(#c8c8c8 1px, transparent 1px) 0 0 / 12px 12px,
    linear-gradient(90deg, #c8c8c8 1px, transparent 1px) 0 0 / 12px 12px,
    #e2e2e2;
}
.ctl {
  position: absolute;
}
.ctl label {
  display: block;
}
.visa-ctl {
  top: 1px;
  left: 1px;
}
.ring {
  display: flex;
  align-items: center;
  width: 108px;
  height: 31px;
  margin: 6px 0 0 1px;
  padding-left: 6px;
  border: 1px solid #888;
  border-radius: 3px;
  background: linear-gradient(#f4f4f4, #cfcfcf);
  box-shadow: inset 0 0 0 1px #f4f4f4, 0 2px 2px rgba(0, 0, 0, 0.3);
}
.io {
  background: #b8b8b8;
}
.ring input {
  width: 68px;
  height: 21px;
  padding-left: 1px;
  border: 1px solid #888;
  border-left: 0;
  background: #fff;
}
.ring button {
  width: 14px;
  height: 15px;
  margin-left: 4px;
  border: 1px solid #888;
  border-radius: 3px;
  background: linear-gradient(#fff, #ddd);
}
.ring button::after {
  content: "";
  display: block;
  width: 0;
  margin: 0 auto;
  border: 3px solid transparent;
  border-top-color: #444;
  border-bottom: 0;
}
.baud-ctl {
  top: 61px;
  left: 1px;
}
.baud-ctl label {
  padding-left: 2px;
}
.numeric {
  display: flex;
  width: 56px;
  height: 22px;
  margin-top: 2px;
  border: 1px solid #666;
  border-width: 0 1px 1px 0;
  background: #b3b3b3;
}
.spin {
  display: flex;
  flex-direction: column;
  justify-content: space-around;
  width: 6px;
}
.spin button {
  width: 6px;
  border: 3px solid transparent;
}
.spin .inc {
  border-bottom: 4px solid #000;
  border-top: 0;
}
.spin .dec {
  border-top: 4px solid #000;
  border-bottom: 0;
}
.numeric input {
  flex: 1;
  min-width: 0;
  margin: 1px;
  padding-left: 1px;
  border: 1px solid #555;
  border-color: #555 #ddd #ddd #555;
}
.enable-ctl {
  top: 122px;
  left: 152px;
}
.enable-ctl label {
  padding-left: 1px;
}
.on-btn {
  width: 40px;
  height: 22px;
  margin-top: 2px;
  border: 1px solid #000;
  background: #b3b3b3;
  box-shadow: inset 1px 1px #ddd, inset -2px -2px #666;
}
.buffer-ctl {
  top: 85px;
  left: 333px;
}
.buffer {
  position: relative;
  width: 286px;
  height: 177px;
  margin: 6px 0 0 2px;
}
.buffer textarea {
  display: block;
  width: 100%;
  height: 100%;
  resize: none;
  background: #d2d2d2;
  box-shadow: -2px -2px 2px rgba(0, 0, 0, 0.4), 2px 2px 1px #f4f4f4;
}
.handle {
  position: absolute;
  width: 8px;
  height: 8px;
  border: 1px solid #fff;
  background: #0078d7;
}
.handle.t {
  top: -4px;
}
.handle.m {
  top: 84px;
}
.handle.b {
  bottom: -4px;
}
.handle.l {
  left: -4px;
}
.handle.c {
  left: 139px;
}
.handle.r {
  right: -4px;
}
.stop-ctl {
  top: 317px;
  left: 348px;
}
.stop-btn {
  width: 41px;
  height: 22px;
  margin-top: 4px;
  border: 1px solid #444;
  background: #bbb;
  box-shadow: inset 2px 2px 2px #ddd, inset -3px -2px 2px #777;
  color: #f00;
}

/* probe watch */
.probe-body {
  display: flex;
  flex: 1;
  min-height: 0;
  background: #f0f0f0;
}
.probe-left {
  display: flex;
  flex-direction: column;
  width: 586px;
}
.probe-tools {
  display: flex;
  gap: 4px;
  padding: 4px 2px 3px 6px;
}
.probe-tools button {
  display: flex;
  align-items: center;
  justify-content: center;
  width: 22px;
  height: 22px;
  border: 1px solid #adadad;
  background: #e1e1e1;
}
.probe-tools .right {
  margin-left: auto;
}
.probe-tools .collapse {
  width: 24px;
  margin-left: 4px;
}
.probe-list {
  display: flex;
  flex: 1;
  padding: 1px;
  border: 1px solid #828790;
  border-bottom: 0;
  background: #fff;
}
.rows {
  flex: 1;
  min-width: 0;
  background:
    linear-gradient(#e8e8e8, #e8e8e8) 188px 0 / 1px 100% no-repeat,
    linear-gradient(#e8e8e8, #e8e8e8) 384px 0 / 1px 100% no-repeat;
}
.rows table {
  width: 100%;
  table-layout: fixed;
  border-collapse: collapse;
}
.c-name {
  width: 189px;
}
.c-value {
  width: 196px;
}
.rows th,
.rows td {
  height: 18px;
  padding: 0 0 1px 5px;
  overflow: hidden;
  vertical-align: top;
  text-align: left;
  font-weight: normal;
  white-space: nowrap;
  border-right: 1px solid #e8e8e8;
}
.rows th {
  padding-bottom: 0;
  background: #f0f0f0;
  border-bottom: 1px solid #777;
}
.rows th:last-child,
.rows td:last-child {
  border-right: 0;
}
.rows td:first-child {
  padding-left: 54px;
}
.rows .group td:first-child {
  padding-left: 5px;
}
.fold {
  width: 9px;
  height: 9px;
  margin-right: 24px;
  border: 1px solid #888;
  vertical-align: middle;
  background: linear-gradient(#2a5aa8, #2a5aa8) 1px 3px / 5px 1px no-repeat #f4f4f4;
}
.selected td {
  background: #0078d7;
  color: #fff;
}
.probe-display {
  display: flex;
  flex: 1;
  flex-direction: column;
  margin: 1px 0 0 6px;
  border-left: 1px solid #777;
}
.probe-display h3 {
  padding: 10px 0 4px 1px;
}
.display-pane {
  flex: 1;
  margin-left: 2px;
  padding: 5px 0 0 5px;
  border: 2px solid #c4c4c4;
  border-width: 2px 0 0 1px;
  background: #e2e2e2;
}
.bytes {
  display: flex;
  height: 22px;
  margin-top: 2px;
  border-bottom: 1px solid #555;
  background: #b3b3b3;
}
.radix {
  padding-left: 1px;
  font-size: 9px;
  line-height: 21px;
}
.bytes input {
  flex: 1;
  margin: 1px 0 1px 1px;
  padding-left: 1px;
  border: 1px solid #555;
  border-width: 1px 0 0 1px;
}
```
